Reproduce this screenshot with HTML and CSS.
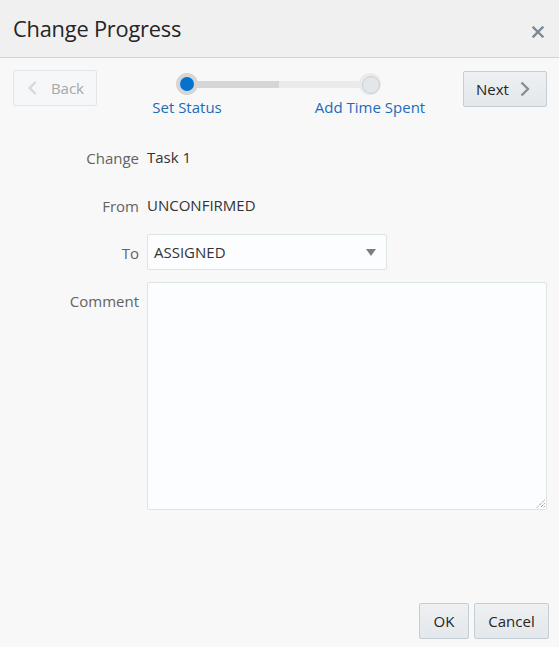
FILE: index.html
```html
<!DOCTYPE html>
<html>
<head>
<meta charset="utf-8">
<link rel="stylesheet" href="styles.css">
</head>
<body>
<div class="dialog">
  <div class="header">
    <h1 class="title">Change Progress</h1>
    <span class="close"><svg width="12" height="12" viewBox="0 0 12 12"><path d="M1.5 1.5 L10.5 10.5 M10.5 1.5 L1.5 10.5" stroke="#7b8a98" stroke-width="2.4" stroke-linecap="square"/></svg></span>
  </div>
  <div class="body">
    <div class="trainbar">
      <button class="btn btn-back" disabled><svg width="12" height="16" viewBox="0 0 12 16"><path d="M9.5 1.5 L3 8 L9.5 14.5" fill="none" stroke="#d4d7da" stroke-width="2.4"/></svg><span>Back</span></button>
      <div class="train">
        <div class="track"><div class="track-done"></div></div>
        <div class="stop stop-1"><span class="dot dot-on"></span><span class="stop-label">Set Status</span></div>
        <div class="stop stop-2"><span class="dot dot-off"></span><span class="stop-label">Add Time Spent</span></div>
      </div>
      <button class="btn btn-next"><span>Next</span><svg width="12" height="16" viewBox="0 0 12 16"><path d="M2.5 1.5 L9 8 L2.5 14.5" fill="none" stroke="#8a8f94" stroke-width="2.4"/></svg></button>
    </div>
    <div class="form">
      <div class="row"><label class="lbl">Change</label><div class="val">Task 1</div></div>
      <div class="row"><label class="lbl">From</label><div class="val">UNCONFIRMED</div></div>
      <div class="row row-to"><label class="lbl">To</label><div class="select"><span>ASSIGNED</span><span class="caret"></span></div></div>
      <div class="row row-comment"><label class="lbl">Comment</label><div class="textarea"><svg class="grip" width="9" height="9" viewBox="0 0 9 9"><path d="M8.5 1 L1 8.5 M8.5 4.5 L4.5 8.5 M8.5 7.5 L7.5 8.5" stroke="#6a6a6a" stroke-width="1" stroke-dasharray="1 1"/></svg></div></div>
    </div>
  </div>
  <div class="footer">
    <button class="btn btn-ok">OK</button>
    <button class="btn btn-cancel">Cancel</button>
  </div>
</div>
</body>
</html>
```
FILE: styles.css
```css
* { box-sizing: border-box; }
html, body { margin: 0; padding: 0; }
body {
  width: 559px;
  height: 647px;
  background: #f8f8f8;
  font-family: "Open Sans", "Noto Sans", sans-serif;
  color: #333;
  overflow: hidden;
}
.dialog { display: flex; flex-direction: column; height: 647px; }
.header {
  height: 58px;
  background: #f0f0f0;
  border-bottom: 1px solid #cfd4d8;
  display: flex;
  align-items: center;
  justify-content: space-between;
  padding: 0 15px 0 13px;
}
.title {
  margin: 0;
  font-weight: 400;
  font-size: 21.8px;
  color: #252525;
  letter-spacing: -0.2px;
  position: relative;
  top: 0px;
}
.close { display: flex; position: relative; top: 3px; }
.body { flex: 1; padding: 13px 12px 0 13px; }
.trainbar {
  display: flex;
  justify-content: space-between;
  align-items: flex-start;
  height: 50px;
}
.btn {
  font-family: inherit;
  font-size: 15px;
  height: 36px;
  border-radius: 2px;
  display: inline-flex;
  align-items: center;
  padding: 0 12px;
  color: #252525;
  background: linear-gradient(#eef0f2, #e4e8eb);
  border: 1px solid #c4ced7;
}
.btn-back {
  width: 84px;
  margin-top: -1px;
  background: #f6f7f8;
  border-color: #e3e6e9;
  color: #a8a8a8;
  gap: 13px;
  padding-left: 13px;
}
.btn-next {
  width: 84px;
  gap: 10px;
  padding-left: 12px;
}
.train { position: relative; width: 290px; height: 50px; margin-left: 16px; margin-top: 2px; }
.track {
  position: absolute;
  left: 44px;
  top: 8px;
  width: 184px;
  height: 7px;
  background: #eaeaea;
}
.track-done { width: 92px; height: 7px; background: #d6d6d6; }
.stop {
  position: absolute;
  top: 0;
  display: flex;
  flex-direction: column;
  align-items: center;
  width: 140px;
}
.stop-1 { left: -26px; }
.stop-2 { left: 157px; }
.dot {
  width: 22px;
  height: 22px;
  border-radius: 50%;
  display: block;
  position: relative;
}
.dot-on { background: #d6d6d6; }
.dot-on::after {
  content: "";
  position: absolute;
  left: 4px; top: 4px;
  width: 14px; height: 14px;
  border-radius: 50%;
  background: #0572ce;
}
.dot-off { background: #eaeaea; }
.dot-off::after {
  content: "";
  position: absolute;
  left: 3px; top: 3px;
  width: 16px; height: 16px;
  border-radius: 50%;
  background: #e4e7ea;
  border: 1px solid #c8d0d8;
}
.stop-label {
  font-size: 15px;
  color: #1a6cb8;
  margin-top: 2px;
  white-space: nowrap;
}
.form { display: flex; flex-direction: column; margin-top: 21px; }
.row { display: flex; align-items: flex-start; height: 48px; }
.lbl {
  width: 134px;
  text-align: right;
  font-size: 15px;
  color: #636363;
  padding-right: 8px;
  line-height: 20px;
  padding-top: 6px;
}
.val {
  font-size: 15px;
  color: #333;
  line-height: 20px;
  padding-top: 5px;
}
.row-to { height: 44px; }
.row-to .lbl { padding-top: 5px; }
.select {
  margin-top: -4px;
  width: 240px;
  height: 36px;
  border: 1px solid #dfe4e7;
  border-radius: 2px;
  background: #fcfdfe;
  display: flex;
  align-items: center;
  justify-content: space-between;
  padding: 0 10px 0 6px;
  font-size: 15px;
  color: #333;
}
.caret {
  width: 0; height: 0;
  border-left: 5px solid transparent;
  border-right: 5px solid transparent;
  border-top: 7px solid #7d7d7d;
  margin-top: 1px;
}
.row-comment { height: auto; }
.row-comment .lbl { padding-top: 9px; }
.textarea {
  width: 400px;
  height: 228px;
  border: 1px solid #dfe4e7;
  border-radius: 2px;
  background: #fcfdfe;
  position: relative;
}
.grip { position: absolute; right: 1px; bottom: 1px; }
.footer {
  display: flex;
  justify-content: flex-end;
  gap: 5px;
  padding: 0 10px 8px 0;
}
.btn-ok { width: 50px; justify-content: center; padding: 0; }
.btn-cancel { width: 75px; justify-content: center; padding: 0; }
```
